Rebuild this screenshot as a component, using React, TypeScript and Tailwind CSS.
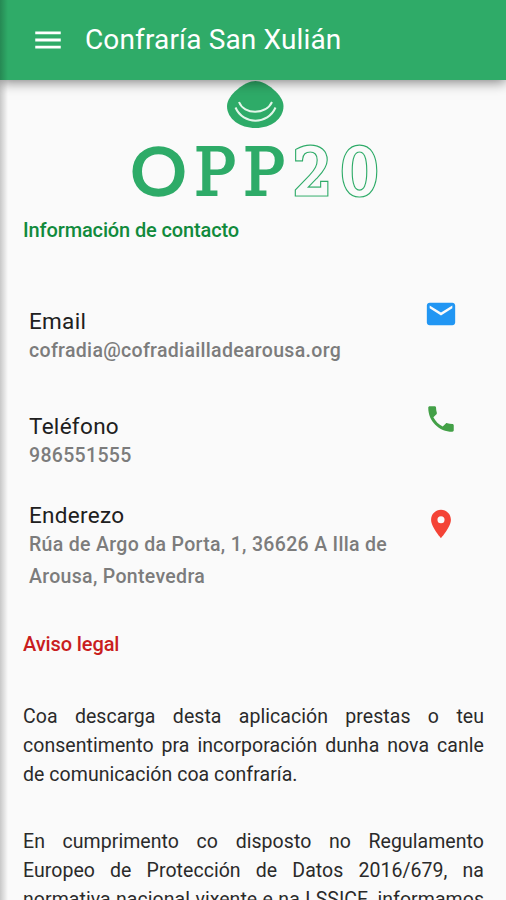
import { MdEmail, MdLocationOn, MdMenu, MdPhone } from "react-icons/md";

const contacts = [
  {
    title: "Email",
    detail: "cofradia@cofradiailladearousa.org",
    icon: MdEmail,
    color: "text-[#2196f3]",
    row: "h-[105px]",
    text: "pt-[9px]",
  },
  {
    title: "Teléfono",
    detail: "986551555",
    icon: MdPhone,
    color: "text-[#43a047]",
    row: "h-[105px]",
    text: "pt-[9px]",
  },
  {
    title: "Enderezo",
    detail: "Rúa de Argo da Porta, 1, 36626 A Illa de Arousa, Pontevedra",
    icon: MdLocationOn,
    color: "text-[#f44336]",
    row: "h-[122px]",
    text: "-mt-[7px]",
  },
];

function Logo() {
  return (
    <svg className="h-[125px] w-[260px] overflow-visible" viewBox="0 0 260 125" aria-label="OPP20">
      <defs>
        <g id="digits" fontFamily="'DejaVu Serif'" fontSize="64" strokeLinejoin="miter">
          <text x="167" y="114.500" textLength="39" lengthAdjust="spacingAndGlyphs">
            2
          </text>
          <text x="214" y="114.500" textLength="39" lengthAdjust="spacingAndGlyphs">
            0
          </text>
        </g>
      </defs>

      {/* Clam shell */}
      <path
        d="M129.500 1C140 1 157.500 15 157.500 26C157.500 39 145 48 129.500 48C114 48 101 39 101 26C101 15 119 1 129.500 1Z"
        fill="#2eab68"
      />
      <g fill="none" stroke="#e3f6ea" strokeWidth="2" strokeLinecap="butt">
        <path d="M113 22C118 35 140 35 146 22" />
        <path d="M109.500 27.500C117 45 142 45 149.500 27.500" />
      </g>

      {/* Wordmark */}
      <g fill="#2eab68" stroke="#2eab68">
        <text x="4.500" y="114.500" fontSize="65" fontFamily="Lato" textLength="56" lengthAdjust="spacingAndGlyphs" strokeWidth="2.400">
          O
        </text>
        <text x="68" y="114.500" fontSize="65" fontFamily="'DejaVu Serif'" textLength="42" lengthAdjust="spacingAndGlyphs" strokeWidth="2">
          P
        </text>
        <text x="117" y="114.500" fontSize="65" fontFamily="'DejaVu Serif'" textLength="42" lengthAdjust="spacingAndGlyphs" strokeWidth="2">
          P
        </text>
      </g>
      <use href="#digits" fill="#2eab68" stroke="#2eab68" strokeWidth="5" />
      <use href="#digits" fill="#fafafa" stroke="#fafafa" strokeWidth="2.600" />
    </svg>
  );
}

export default function App() {
  return (
    <div className="relative flex h-[900px] w-[506px] flex-col overflow-hidden bg-[#fafafa] font-[Roboto,sans-serif]">
      <header className="z-10 flex h-20 shrink-0 items-center bg-[#2fab68] pl-[31px] text-white shadow-[0_2px_12px_rgba(0,0,0,0.5)]">
        <MdMenu className="size-[34px]" />
        <h1 className="ml-5 text-[28px] leading-8 tracking-[0.15px]">Confraría San Xulián</h1>
      </header>

      <main className="flex flex-col pl-[23px] pr-[22px]">
        <div className="ml-[103px]">
          <Logo />
        </div>

        <h2 className="mt-[11px] text-[20px] font-medium leading-[29px] tracking-[-0.13px] text-[#118a3c]">Información de contacto</h2>

        <div className="mt-[52px] pl-1.5">
          {contacts.map(({ title, detail, icon: Icon, color, row, text }) => (
            <div key={title} className={`flex justify-between ${row}`}>
              <div className={`w-[370px] ${text}`}>
                <h3 className="text-[22.500px] leading-[30px] tracking-[0.3px] text-[#202020]">{title}</h3>
                <p className="-mt-px text-[19.500px] font-medium leading-8 tracking-[0.32px] text-[#7c7c7c]">{detail}</p>
              </div>
              <Icon className={`mr-[26px] size-[34px] shrink-0 ${color}`} />
            </div>
          ))}
        </div>

        <h2 className="mt-px text-[20px] font-medium leading-[29px] tracking-[-0.1px] text-[#c91d20]">Aviso legal</h2>

        {/* Legal text */}
        <div className="mt-[43px] flex flex-col gap-[38px] text-justify text-[19.500px] leading-[29px] tracking-[0.05px] text-[#2a2a2a]">
          <p>
            Coa descarga desta aplicación prestas o teu consentimento pra incorporación dunha nova canle de
            comunicación coa confraría.
          </p>
          <p className="[text-align-last:justify]">
            En cumprimento co disposto no Regulamento Europeo de Protección de Datos 2016/679, na normativa
            nacional vixente e na LSSICE, informamos
          </p>
        </div>
      </main>

      {/* Screen edge shadow */}
      <div className="pointer-events-none absolute inset-y-0 left-0 z-20 w-2 bg-linear-to-r from-black/20 to-transparent" />
    </div>
  );
}
